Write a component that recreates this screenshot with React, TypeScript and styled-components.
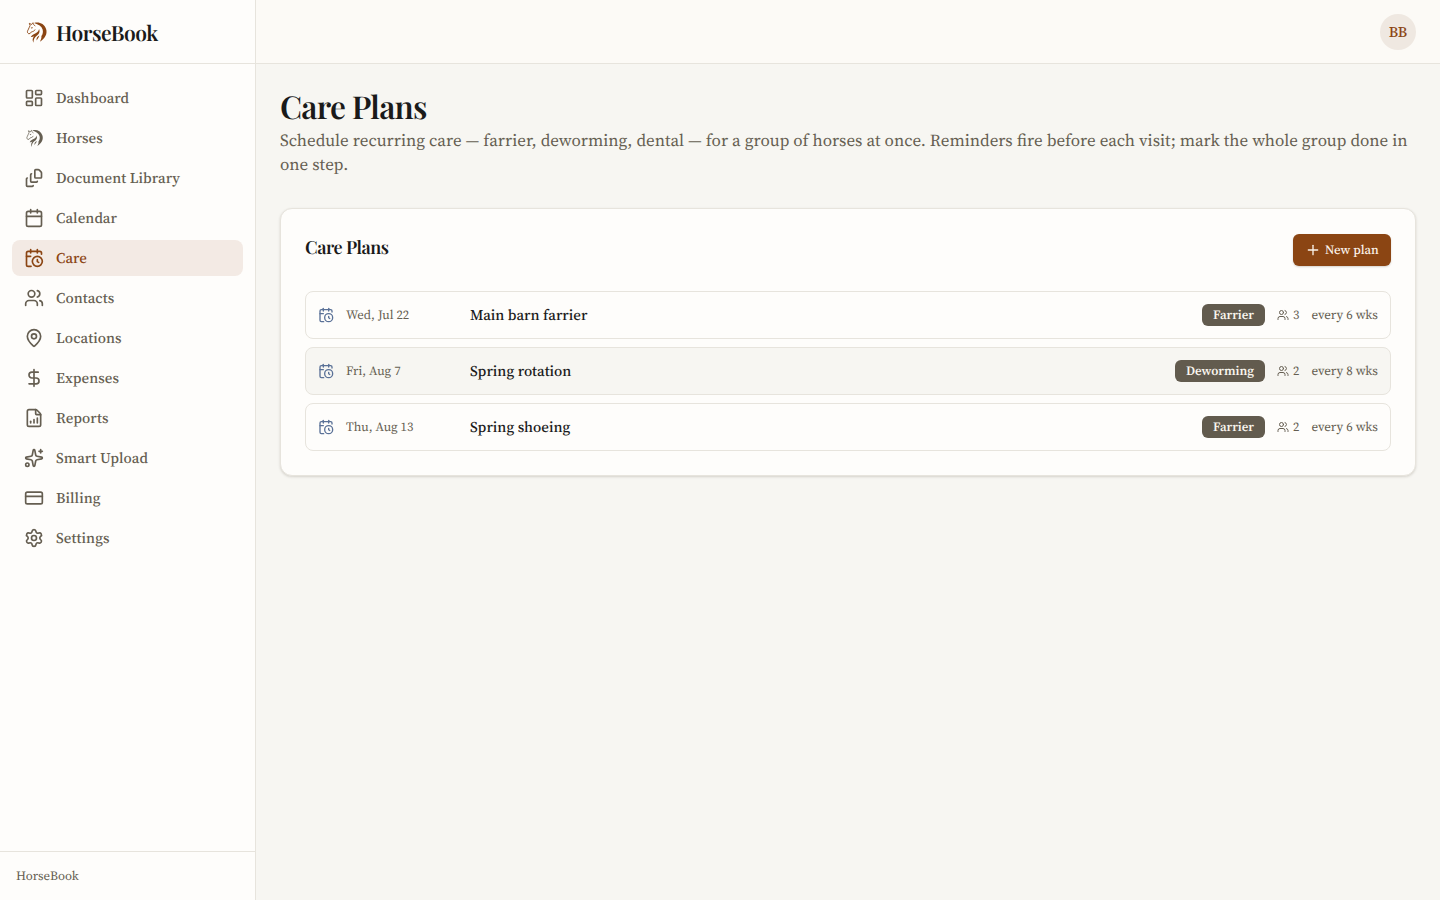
import React from "react";
import styled, { createGlobalStyle } from "styled-components";
import {
  Calendar,
  CalendarClock,
  CreditCard,
  DollarSign,
  FileChartColumnIncreasing,
  FileStack,
  LayoutDashboard,
  MapPin,
  Plus,
  Settings,
  Sparkles,
  Users,
} from "lucide-react";

const color = {
  page: "#f7f6f2",
  surface: "#fefdfb",
  topbar: "#fcfaf6",
  line: "#e7e4dd",
  ink: "#1a1a1a",
  muted: "#655e51",
  brand: "#8b4513",
  active: "#f3eae4",
};

const GlobalStyle = createGlobalStyle`
  *, *::before, *::after { box-sizing: border-box; }
  body {
    margin: 0;
    background: ${color.page};
    color: ${color.ink};
    font-family: "Source Serif 4", "Liberation Serif", serif;
    font-size: 17px;
    text-rendering: geometricPrecision;
    -webkit-font-smoothing: antialiased;
  }
  h1, h2, p, ul { margin: 0; padding: 0; }
  ul { list-style: none; }
`;

const Shell = styled.div`
  display: flex;
  height: 100vh;
  overflow: hidden;
`;

const Sidebar = styled.aside`
  display: flex;
  flex-direction: column;
  width: 256px;
  flex-shrink: 0;
  background: ${color.surface};
  border-right: 1px solid ${color.line};
`;

const Brand = styled.div`
  display: flex;
  align-items: center;
  gap: 8px;
  height: 64px;
  padding: 0 24px;
  border-bottom: 1px solid ${color.line};
  color: ${color.brand};
`;

const BrandName = styled.span`
  padding-top: 2px;
  color: ${color.ink};
  font-family: "Playfair Display", "Liberation Serif", serif;
  font-size: 21px;
  font-weight: 600;
  letter-spacing: -0.025em;
  line-height: 28px;
`;

const Nav = styled.nav`
  flex: 1;
  padding: 16px 12px;
`;

const NavList = styled.ul`
  display: flex;
  flex-direction: column;
  gap: 4px;
`;

const NavItem = styled.li<{ $active?: boolean }>`
  display: flex;
  align-items: center;
  gap: 12px;
  height: 36px;
  padding: 0 12px;
  border-radius: 8px;
  background: ${(p) => (p.$active ? color.active : "transparent")};
  color: ${(p) => (p.$active ? color.brand : color.muted)};
  font-size: 14.875px;
  font-weight: 500;
  letter-spacing: 0.05px;
  line-height: 20px;
`;

const SidebarFooter = styled.div`
  height: 49px;
  padding: 17px 16px 15px;
  border-top: 1px solid ${color.line};
  color: ${color.muted};
  font-size: 12.75px;
  line-height: 16px;
`;

const Column = styled.div`
  display: flex;
  flex: 1;
  flex-direction: column;
  min-width: 0;
`;

const TopBar = styled.header`
  display: flex;
  align-items: center;
  justify-content: flex-end;
  height: 64px;
  padding: 0 24px;
  background: ${color.topbar};
  border-bottom: 1px solid ${color.line};
`;

const Avatar = styled.div`
  display: grid;
  place-items: center;
  width: 36px;
  height: 36px;
  border-radius: 50%;
  background: #efe8e1;
  color: ${color.brand};
  font-size: 14.875px;
  font-weight: 500;
`;

const Main = styled.main`
  flex: 1;
  padding: 24px;
`;

const PageTitle = styled.h1`
  margin-bottom: 4px;
  font-family: "Playfair Display", "Liberation Serif", serif;
  font-size: 31.6px;
  font-weight: 600;
  letter-spacing: -0.025em;
  line-height: 36px;
`;

const Lead = styled.p`
  margin-bottom: 32px;
  color: ${color.muted};
  font-size: 16.99px;
  line-height: 24px;
`;

const Card = styled.section`
  padding: 24px;
  background: ${color.surface};
  border: 1px solid ${color.line};
  border-radius: 12px;
  box-shadow: 0 1px 3px rgba(60, 50, 35, 0.12), 0 1px 2px rgba(60, 50, 35, 0.06);
`;

const CardHeader = styled.div`
  display: flex;
  align-items: flex-start;
  justify-content: space-between;
  height: 58px;
  padding-top: 1px;
`;

const CardTitle = styled.h2`
  font-family: "Playfair Display", "Liberation Serif", serif;
  font-size: 18.05px;
  font-weight: 600;
  letter-spacing: -0.025em;
  line-height: 25px;
`;

const NewPlanButton = styled.button`
  display: flex;
  align-items: center;
  gap: 4px;
  width: 98px;
  height: 32px;
  padding: 0 12px;
  border: 0;
  border-radius: 6px;
  background: ${color.brand};
  color: #fbf3ea;
  font-family: inherit;
  font-size: 12.75px;
  font-weight: 500;
  text-rendering: inherit;
  white-space: nowrap;
  box-shadow: 0 1px 2px rgba(60, 40, 20, 0.2);

  svg {
    flex-shrink: 0;
  }
`;

const PlanList = styled.ul`
  display: flex;
  flex-direction: column;
  gap: 8px;
`;

const PlanRow = styled.li<{ $hovered?: boolean }>`
  display: flex;
  align-items: center;
  gap: 12px;
  height: 48px;
  padding: 0 12px;
  border: 1px solid ${color.line};
  border-radius: 8px;
  background: ${(p) => (p.$hovered ? color.page : color.surface)};

  > svg {
    color: #5a7197;
  }
`;

const PlanDate = styled.span`
  width: 112px;
  color: ${color.muted};
  font-size: 12.75px;
`;

const PlanName = styled.span`
  flex: 1;
  font-size: 14.92px;
  font-weight: 500;
`;

const Badge = styled.span`
  height: 22px;
  padding: 1px 11px 0;
  border-radius: 6px;
  background: #625b4e;
  color: #faf6ef;
  font-size: 12.8px;
  font-weight: 600;
  line-height: 21px;
`;

const HorseCount = styled.span`
  display: flex;
  align-items: center;
  gap: 4px;
  color: ${color.muted};
  font-size: 12.75px;
`;

const Interval = styled.span`
  color: ${color.muted};
  font-size: 13px;
  white-space: nowrap;
`;

function HorseIcon({ size = 24 }: { size?: number }) {
  return (
    <svg width={size} height={size} viewBox="0 0 24 24" fill="currentColor" aria-hidden="true">
      <g transform="translate(0.5 0.5)">
        <path d="M9.6 2.5C14.6 1 19.7 3.3 21.5 8.2c1.800 4.800-.9 9.800-6.100 13 1.300-2.300 1.700-3.900 1.500-5.600 1.400-1.700 1.900-4.300 1.200-6.600C17.2 5.900 14 3.800 9.6 2.500Z" />
        <path d="M14.6 8.400c1.300 3.400-.5 5.300-2.400 6.800-1.900 1.500-3.300 3.500-3.300 7-1.400-3-.7-4.800.8-6.400-1.200.7-2.300.9-3.400.7 1.300-2.700 3.600-2.900 5.300-4 1.400-.9 2.600-2.100 3-4.100Z" />
        <path d="M14.8 15c-.1 2.100-1.900 2.900-2.600 5-.6-2.200.6-4 2.600-5Z" />
        <path d="M10.800 5.500C9.300 4.700 8.600 3.500 8.700 2.300 7.900 2.700 7.300 3.200 7.100 4L4.800 2.800l.8 2.300C4.600 6.500 4.500 8 3.600 9.400c-.8 1.300-.9 2.300-.3 3.100l1 .8 1.400-.4 1.300-1.600c1.600-.2 3-.8 3.600-2.300" fill="none" stroke="currentColor" strokeWidth="0.9" strokeLinejoin="round" />
        <path d="M6.200 7.300l2.200-.8-.9 1.700Z" />
      </g>
    </svg>
  );
}

const navigation = [
  { label: "Dashboard", icon: LayoutDashboard },
  { label: "Horses", icon: HorseIcon },
  { label: "Document Library", icon: FileStack },
  { label: "Calendar", icon: Calendar },
  { label: "Care", icon: CalendarClock, active: true },
  { label: "Contacts", icon: Users },
  { label: "Locations", icon: MapPin },
  { label: "Expenses", icon: DollarSign },
  { label: "Reports", icon: FileChartColumnIncreasing },
  { label: "Smart Upload", icon: Sparkles },
  { label: "Billing", icon: CreditCard },
  { label: "Settings", icon: Settings },
];

const plans = [
  { date: "Wed, Jul 22", name: "Main barn farrier", kind: "Farrier", horses: 3, weeks: 6 },
  { date: "Fri, Aug 7", name: "Spring rotation", kind: "Deworming", horses: 2, weeks: 8, hovered: true },
  { date: "Thu, Aug 13", name: "Spring shoeing", kind: "Farrier", horses: 2, weeks: 6 },
];

export default function App() {
  return (
    <Shell>
      <GlobalStyle />
      <Sidebar>
        <Brand>
          <HorseIcon size={24} />
          <BrandName>HorseBook</BrandName>
        </Brand>
        <Nav>
          <NavList>
            {navigation.map(({ label, icon: Icon, active }) => (
              <NavItem key={label} $active={active}>
                <Icon size={20} />
                {label}
              </NavItem>
            ))}
          </NavList>
        </Nav>
        <SidebarFooter>HorseBook</SidebarFooter>
      </Sidebar>
      <Column>
        <TopBar>
          <Avatar>BB</Avatar>
        </TopBar>
        <Main>
          <PageTitle>Care Plans</PageTitle>
          <Lead>
            Schedule recurring care — farrier, deworming, dental — for a group of horses at once. Reminders fire
            before each visit; mark the whole group done in one step.
          </Lead>
          <Card>
            <CardHeader>
              <CardTitle>Care Plans</CardTitle>
              <NewPlanButton>
                <Plus size={16} />
                New plan
              </NewPlanButton>
            </CardHeader>
            <PlanList>
              {plans.map((plan) => (
                <PlanRow key={plan.name} $hovered={plan.hovered}>
                  <CalendarClock size={16} />
                  <PlanDate>{plan.date}</PlanDate>
                  <PlanName>{plan.name}</PlanName>
                  <Badge>{plan.kind}</Badge>
                  <HorseCount>
                    <Users size={12} />
                    {plan.horses}
                  </HorseCount>
                  <Interval>every {plan.weeks} wks</Interval>
                </PlanRow>
              ))}
            </PlanList>
          </Card>
        </Main>
      </Column>
    </Shell>
  );
}
